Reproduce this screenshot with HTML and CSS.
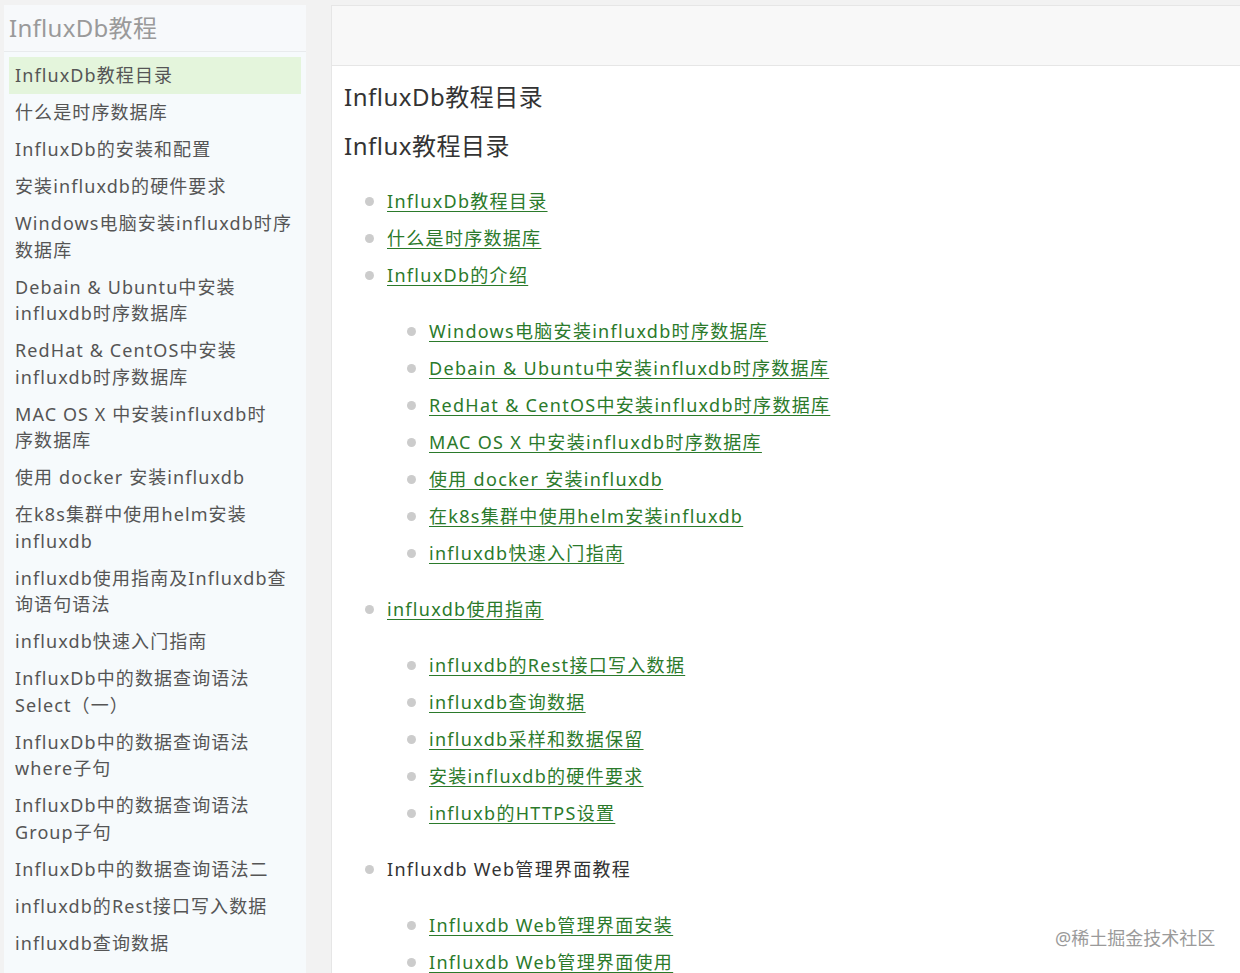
FILE: index.html
```html
<!DOCTYPE html>
<html lang="zh">
<head>
<meta charset="utf-8">
<title>InfluxDb教程目录</title>
<link rel="stylesheet" href="styles.css">
</head>
<body>
<div class="page">
  <aside class="sidebar">
    <div class="side-title">InfluxDb教程</div>
    <ul class="side-list">
      <li class="active">InfluxDb教程目录</li>
      <li>什么是时序数据库</li>
      <li>InfluxDb的安装和配置</li>
      <li>安装influxdb的硬件要求</li>
      <li>Windows电脑安装influxdb时序<br>数据库</li>
      <li>Debain &amp; Ubuntu中安装<br>influxdb时序数据库</li>
      <li>RedHat &amp; CentOS中安装<br>influxdb时序数据库</li>
      <li>MAC OS X 中安装influxdb时<br>序数据库</li>
      <li>使用 docker 安装influxdb</li>
      <li>在k8s集群中使用helm安装<br>influxdb</li>
      <li>influxdb使用指南及Influxdb查<br>询语句语法</li>
      <li>influxdb快速入门指南</li>
      <li>InfluxDb中的数据查询语法<br>Select（一）</li>
      <li>InfluxDb中的数据查询语法<br>where子句</li>
      <li>InfluxDb中的数据查询语法<br>Group子句</li>
      <li>InfluxDb中的数据查询语法二</li>
      <li>influxdb的Rest接口写入数据</li>
      <li>influxdb查询数据</li>
    </ul>
  </aside>
  <main class="main">
    <div class="main-header"></div>
    <div class="content">
      <h1>InfluxDb教程目录</h1>
      <h2>Influx教程目录</h2>
      <ul class="toc">
        <li><a href="#">InfluxDb教程目录</a></li>
        <li><a href="#">什么是时序数据库</a></li>
        <li><a href="#">InfluxDb的介绍</a>
          <ul>
            <li><a href="#">Windows电脑安装influxdb时序数据库</a></li>
            <li><a href="#">Debain &amp; Ubuntu中安装influxdb时序数据库</a></li>
            <li><a href="#">RedHat &amp; CentOS中安装influxdb时序数据库</a></li>
            <li><a href="#">MAC OS X 中安装influxdb时序数据库</a></li>
            <li><a href="#">使用 docker 安装influxdb</a></li>
            <li><a href="#">在k8s集群中使用helm安装influxdb</a></li>
            <li><a href="#">influxdb快速入门指南</a></li>
          </ul>
        </li>
        <li><a href="#">influxdb使用指南</a>
          <ul>
            <li><a href="#">influxdb的Rest接口写入数据</a></li>
            <li><a href="#">influxdb查询数据</a></li>
            <li><a href="#">influxdb采样和数据保留</a></li>
            <li><a href="#">安装influxdb的硬件要求</a></li>
            <li><a href="#">influxb的HTTPS设置</a></li>
          </ul>
        </li>
        <li>Influxdb Web管理界面教程
          <ul>
            <li><a href="#">Influxdb Web管理界面安装</a></li>
            <li><a href="#">Influxdb Web管理界面使用</a></li>
          </ul>
        </li>
      </ul>
    </div>
  </main>
</div>
<div class="watermark">@稀土掘金技术社区</div>
</body>
</html>
```
FILE: styles.css
```css
html, body {
  margin: 0;
  padding: 0;
  height: 100%;
  overflow: hidden;
}
body {
  background: #f2f2f2;
  font-family: "Noto Sans", "Noto Sans CJK SC", sans-serif;
  color: #555;
}
.page {
  display: flex;
  gap: 25px;
  padding: 5px 0 0 4px;
  height: 100%;
  box-sizing: border-box;
}
.sidebar {
  width: 302px;
  flex: none;
  background: #f6fafc;
}
.side-title {
  height: 46px;
  line-height: 46px;
  padding-left: 5px;
  font-size: 24px;
  color: #9a9a9a;
  letter-spacing: 0.3px;
  background: #f7f9fb;
  border-bottom: 1px solid #e8ebed;
}
.side-list {
  list-style: none;
  margin: 0;
  padding: 5px 5px 0;
}
.side-list li {
  font-size: 18px;
  line-height: 26.5px;
  padding: 5.25px 6px;
  letter-spacing: 1.1px;
  color: #555;
}
.side-list li.active {
  background: #e4f5dc;
}
.main {
  flex: 1;
  background: #fff;
  border-left: 1px solid #e6e6e6;
  border-top: 1px solid #e6e6e6;
}
.main-header {
  height: 59px;
  background: #f8f8f8;
  border-bottom: 1px solid #e6e6e6;
}
.content {
  padding-left: 12px;
  color: #333;
}
.content h1, .content h2 {
  font-size: 24px;
  font-weight: normal;
  line-height: 32px;
  letter-spacing: 0.5px;
  margin: 0;
  color: #333;
}
.content h1 { margin-top: 15px; }
.content h2 { margin-top: 17px; }
.toc, .toc ul {
  list-style: none;
  margin: 0;
  padding-left: 43px;
}
.toc { margin-top: 21px; }
.toc ul {
  margin: 19px 0;
  padding-left: 42px;
}
.toc li {
  position: relative;
  font-size: 18px;
  line-height: 37px;
  letter-spacing: 1.3px;
  color: #333;
}
.toc li::before {
  content: "";
  position: absolute;
  left: -22px;
  top: 14px;
  width: 9px;
  height: 9px;
  border-radius: 50%;
  background: #cccccc;
}
.toc a {
  color: #2b7a2b;
  text-decoration: underline;
  text-underline-offset: 3px;
}
.watermark {
  position: absolute;
  left: 1055px;
  top: 924px;
  font-size: 18px;
  color: #9a9a9a;
  text-shadow: 0 0 2px #fff;
}
```
